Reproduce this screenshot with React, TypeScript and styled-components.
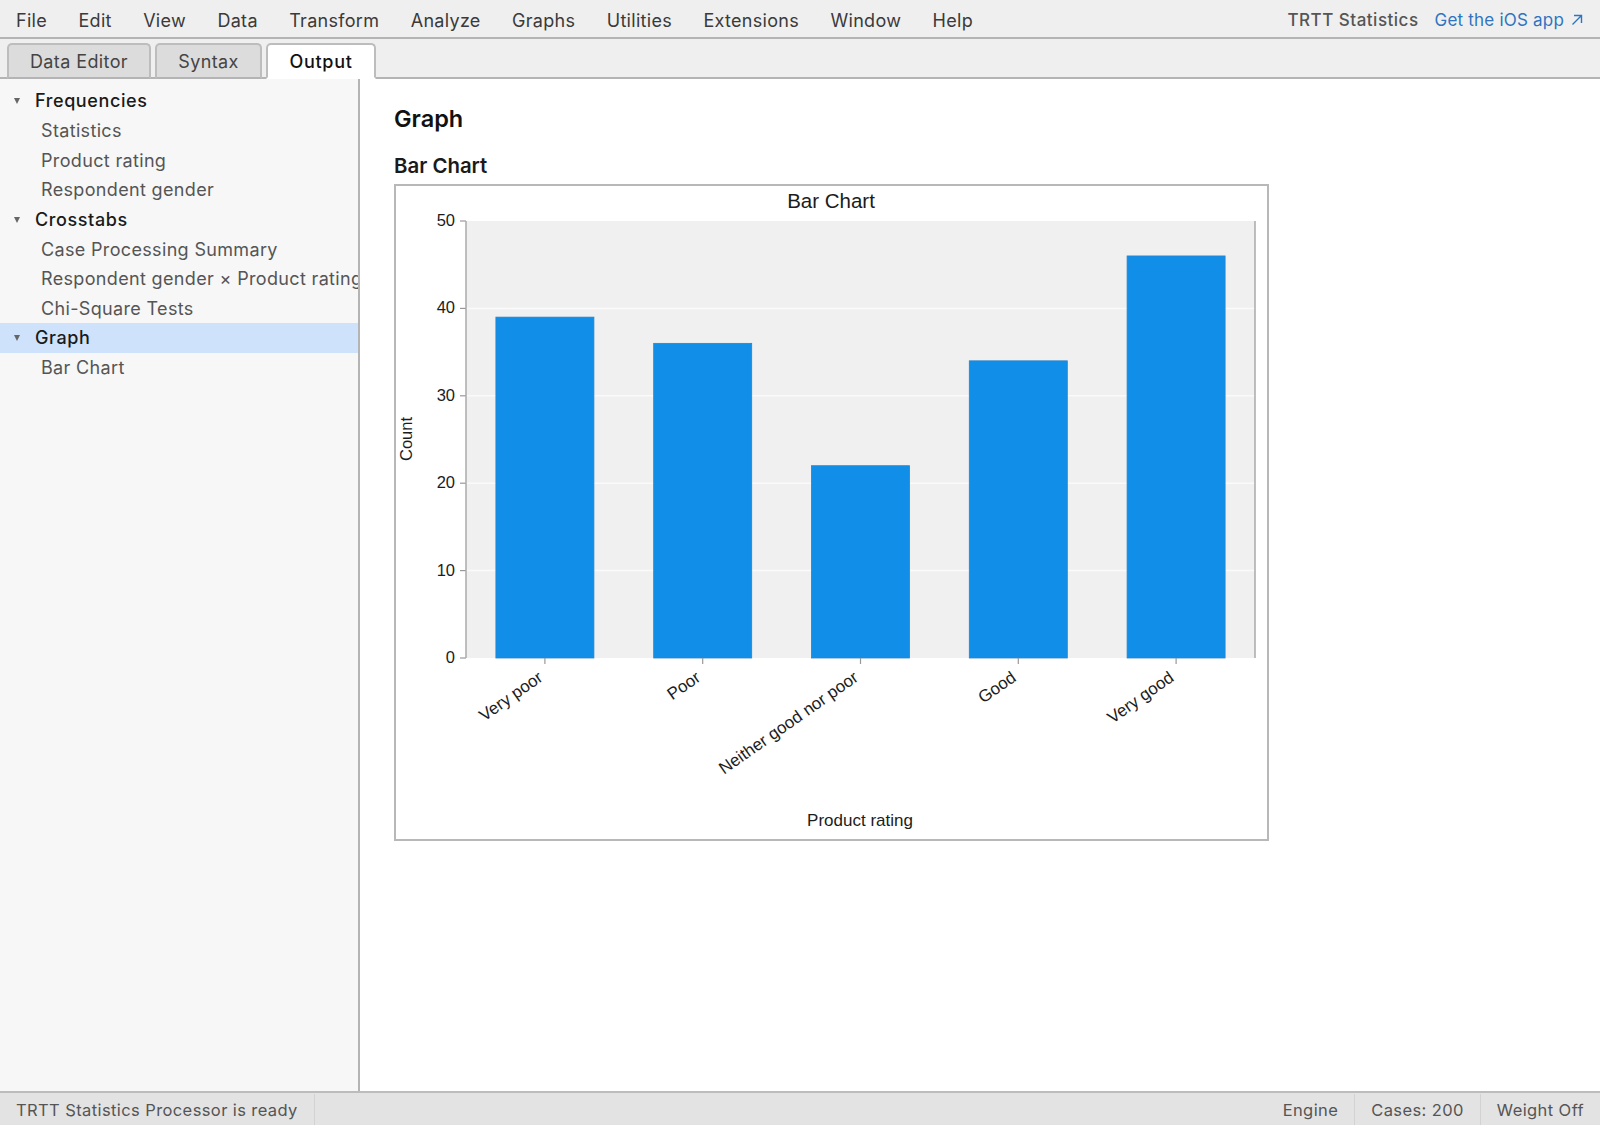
import React from 'react';
import styled, { createGlobalStyle } from 'styled-components';

const GlobalStyle = createGlobalStyle`
  html, body {
    margin: 0;
    padding: 0;
    height: 100%;
    background: #fff;
  }
  #root {
    height: 100%;
  }
  * {
    box-sizing: border-box;
  }
`;

const Page = styled.div`
  display: flex;
  flex-direction: column;
  width: 1600px;
  height: 1125px;
  overflow: hidden;
  font-family: Inter, 'Noto Sans', sans-serif;
  color: #333;
  font-size: 18px;
`;

const MenuBar = styled.header`
  display: flex;
  align-items: center;
  justify-content: space-between;
  height: 39px;
  padding: 3px 17px 0 16px;
  background: #efefef;
  border-bottom: 2px solid #b4b4b4;
`;

const MenuList = styled.nav`
  display: flex;
  gap: 31.4px;
`;

const MenuItem = styled.span`
  color: #3a3a3a;
  letter-spacing: 0.3px;
`;

const MenuRight = styled.div`
  display: flex;
  align-items: center;
  gap: 16px;
`;

const Brand = styled.span`
  color: #555;
  font-size: 17px;
  font-weight: 500;
  letter-spacing: 0.5px;
`;

const IosLink = styled.a`
  display: flex;
  align-items: center;
  gap: 7px;
  color: #2f74c0;
  font-size: 17px;
  letter-spacing: 0.2px;
`;

const LinkArrow = styled.svg`
  display: block;
  width: 12px;
  height: 12px;
  fill: none;
  stroke: #2f74c0;
  stroke-width: 1.4;
`;

const TabBar = styled.div`
  display: flex;
  align-items: flex-end;
  gap: 4px;
  height: 40px;
  padding-left: 7px;
  background: #efefef;
  border-bottom: 2px solid #b4b4b4;
`;

const Tab = styled.div<{ $active?: boolean; $width: number }>`
  display: flex;
  align-items: center;
  justify-content: center;
  width: ${(p) => p.$width}px;
  height: 36px;
  margin-bottom: -2px;
  border: 2px solid #bdbdbd;
  border-bottom: 2px solid ${(p) => (p.$active ? '#fff' : '#b4b4b4')};
  border-radius: 5px 5px 0 0;
  background: ${(p) => (p.$active ? '#fff' : '#dcdcdc')};
  color: ${(p) => (p.$active ? '#111' : '#444')};
  letter-spacing: ${(p) => (p.$active ? 0.7 : 0.4)}px;
  font-weight: ${(p) => (p.$active ? 500 : 400)};
`;

const Body = styled.div`
  display: flex;
  flex: 1;
  min-height: 0;
`;

const Sidebar = styled.aside`
  flex: 0 0 360px;
  padding-top: 7px;
  background: #f7f7f7;
  border-right: 2px solid #b4b4b4;
  overflow: hidden;
`;

const GroupRow = styled.div<{ $selected?: boolean }>`
  display: flex;
  align-items: center;
  height: 29.65px;
  padding-left: 14px;
  gap: 15px;
  background: ${(p) => (p.$selected ? '#cfe2fb' : 'transparent')};
  color: #1a1a1a;
  font-weight: 500;
  letter-spacing: 0.6px;
  white-space: nowrap;
`;

const Caret = styled.i`
  width: 0;
  height: 0;
  margin-top: 1px;
  border-left: 3px solid transparent;
  border-right: 3px solid transparent;
  border-top: 6px solid #666;
`;

const LeafRow = styled.div`
  display: flex;
  align-items: center;
  height: 29.65px;
  padding-left: 41px;
  color: #555;
  letter-spacing: 0.34px;
  white-space: nowrap;
`;

const Output = styled.main`
  flex: 1;
  padding: 25px 0 0 34px;
  background: #fff;
`;

const Heading = styled.h1`
  margin: 0 0 19px;
  font-size: 23.5px;
  line-height: 30px;
  font-weight: 600;
  color: #111;
`;

const SubHeading = styled.h2`
  margin: 0 0 5px;
  font-size: 20.4px;
  line-height: 26px;
  font-weight: 600;
  color: #1a1a1a;
`;

const ChartFrame = styled.figure`
  width: 875px;
  height: 657px;
  margin: 0;
  border: 2px solid #b8b8b8;
  background: #fff;
`;

const ChartSvg = styled.svg`
  display: block;
  font-family: 'Liberation Sans', Arial, sans-serif;
`;

const ChartText = styled.text<{ $size?: number }>`
  font-size: ${(p) => p.$size ?? 16.5}px;
  fill: #1c1c1c;
`;

const StatusBar = styled.footer`
  display: flex;
  align-items: stretch;
  height: 34px;
  padding-top: 1px;
  background: #e3e3e3;
  border-top: 2px solid #bcbcbc;
  color: #555;
  font-size: 16.5px;
  letter-spacing: 0.4px;
`;

const StatusCell = styled.div<{ $first?: boolean }>`
  display: flex;
  align-items: center;
  padding: 0 16px;
  border-right: ${(p) => (p.$first ? '1px solid #d2d2d2' : 'none')};
  border-left: ${(p) => (p.$first ? 'none' : '1px solid #d2d2d2')};
`;

const StatusGap = styled.div`
  flex: 1;
`;

const EngineCell = styled(StatusCell)`
  border-left: none;
`;

const menus = ['File', 'Edit', 'View', 'Data', 'Transform', 'Analyze', 'Graphs', 'Utilities', 'Extensions', 'Window', 'Help'];

const tree = [
  { title: 'Frequencies', items: ['Statistics', 'Product rating', 'Respondent gender'] },
  { title: 'Crosstabs', items: ['Case Processing Summary', 'Respondent gender × Product rating', 'Chi-Square Tests'] },
  { title: 'Graph', items: ['Bar Chart'], selected: true },
];

const bars = [
  { label: 'Very poor', value: 39 },
  { label: 'Poor', value: 36 },
  { label: 'Neither good nor poor', value: 22 },
  { label: 'Good', value: 34 },
  { label: 'Very good', value: 46 },
];

// chart geometry, relative to the inside of the frame
const plot = { left: 70, right: 859, top: 35, bottom: 472 };
const unit = (plot.bottom - plot.top) / 50;
const band = (plot.right - plot.left) / bars.length;
const barWidth = 98;

function BarChart() {
  return (
    <ChartSvg width={871} height={653} viewBox="0 0 871 653">
      <ChartText $size={20.5} x={435} y={22} textAnchor="middle">Bar Chart</ChartText>
      <rect x={plot.left} y={plot.top} width={plot.right - plot.left} height={plot.bottom - plot.top} fill="#f0f0f0" />
      {[10, 20, 30, 40].map((v) => (
        <line key={v} x1={plot.left} x2={plot.right} y1={plot.bottom - v * unit} y2={plot.bottom - v * unit} stroke="#fafafa" strokeWidth={1.5} />
      ))}
      {[0, 10, 20, 30, 40, 50].map((v) => (
        <g key={v}>
          <line x1={plot.left - 6} x2={plot.left} y1={plot.bottom - v * unit} y2={plot.bottom - v * unit} stroke="#999" strokeWidth={1.2} />
          <ChartText x={plot.left - 11} y={plot.bottom - v * unit + 5} textAnchor="end">{v}</ChartText>
        </g>
      ))}
      <line x1={plot.left} x2={plot.left} y1={plot.top} y2={plot.bottom} stroke="#aaa" strokeWidth={1.5} />
      <line x1={plot.right} x2={plot.right} y1={plot.top} y2={plot.bottom} stroke="#aaa" strokeWidth={1.5} />
      {bars.map((b, i) => {
        const cx = plot.left + band * (i + 0.5);
        const lx = cx - 1;
        const ly = plot.bottom + 22;
        return (
          <g key={b.label}>
            <rect x={cx - barWidth / 2} y={plot.bottom - b.value * unit} width={barWidth} height={b.value * unit} fill="#118fe8" stroke="#2a82c8" strokeWidth={0.8} />
            <line x1={cx} x2={cx} y1={plot.bottom} y2={plot.bottom + 6} stroke="#999" strokeWidth={1.2} />
            <ChartText $size={17} x={lx} y={ly} textAnchor="end" transform={`rotate(-35 ${lx} ${ly})`}>{b.label}</ChartText>
          </g>
        );
      })}
      <ChartText x={16} y={253} textAnchor="middle" transform="rotate(-90 16 253)">Count</ChartText>
      <ChartText $size={17} x={464} y={640} textAnchor="middle">Product rating</ChartText>
    </ChartSvg>
  );
}

function App() {
  return (
    <Page>
      <GlobalStyle />
      <MenuBar>
        <MenuList>
          {menus.map((m) => (
            <MenuItem key={m}>{m}</MenuItem>
          ))}
        </MenuList>
        <MenuRight>
          <Brand>TRTT Statistics</Brand>
          <IosLink>
            Get the iOS app
            <LinkArrow viewBox="0 0 12 12">
              <path d="M1.5 10.5 L10.5 1.5 M3 1.5 H10.5 V9" />
            </LinkArrow>
          </IosLink>
        </MenuRight>
      </MenuBar>
      <TabBar>
        <Tab $width={144}>Data Editor</Tab>
        <Tab $width={107}>Syntax</Tab>
        <Tab $width={110} $active>Output</Tab>
      </TabBar>
      <Body>
        <Sidebar>
          {tree.map((group) => (
            <React.Fragment key={group.title}>
              <GroupRow $selected={group.selected}>
                <Caret />
                {group.title}
              </GroupRow>
              {group.items.map((item) => (
                <LeafRow key={item}>{item}</LeafRow>
              ))}
            </React.Fragment>
          ))}
        </Sidebar>
        <Output>
          <Heading>Graph</Heading>
          <SubHeading>Bar Chart</SubHeading>
          <ChartFrame>
            <BarChart />
          </ChartFrame>
        </Output>
      </Body>
      <StatusBar>
        <StatusCell $first>TRTT Statistics Processor is ready</StatusCell>
        <StatusGap />
        <EngineCell>Engine</EngineCell>
        <StatusCell>Cases: 200</StatusCell>
        <StatusCell>Weight Off</StatusCell>
      </StatusBar>
    </Page>
  );
}

export default App;
